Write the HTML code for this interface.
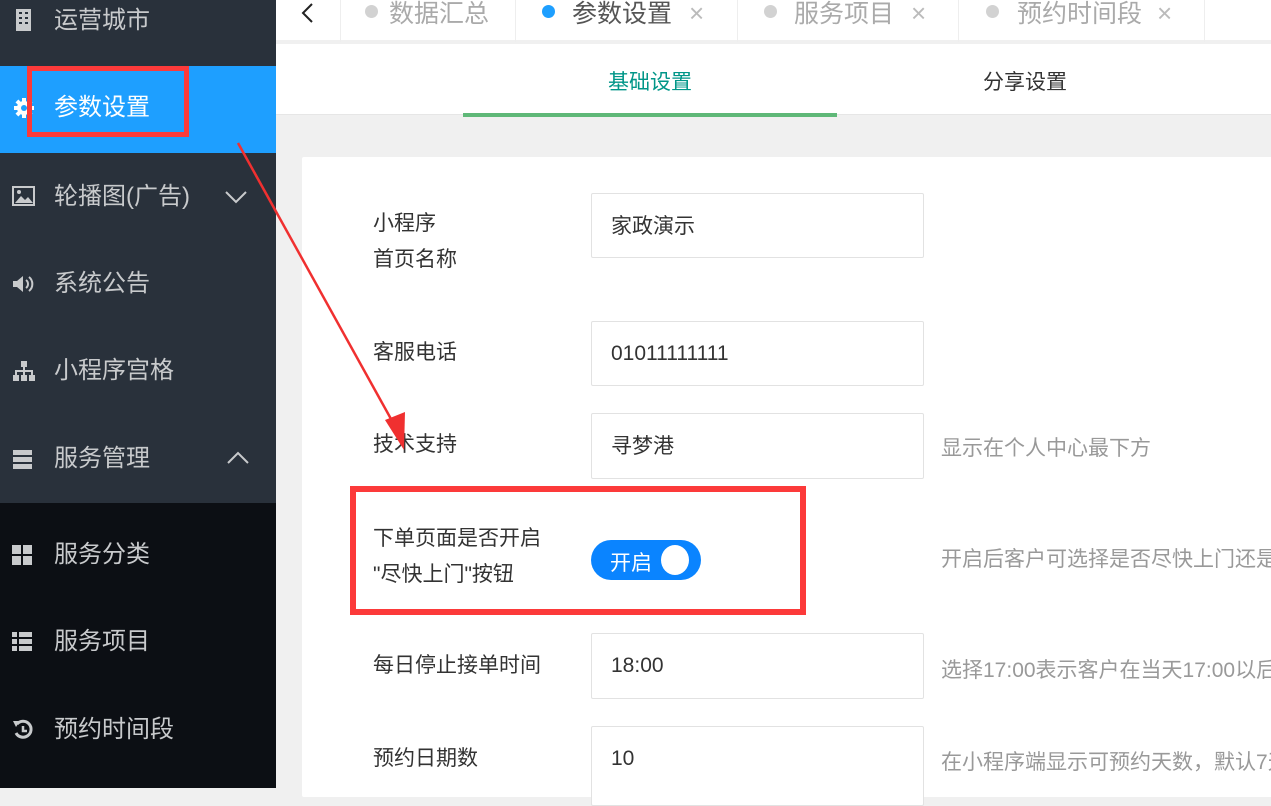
<!DOCTYPE html>
<html><head><meta charset="utf-8"><style>
*{margin:0;padding:0;box-sizing:border-box}
body{width:1271px;height:788px;overflow:hidden;position:relative;background:#f0f0f0;font-family:"Liberation Sans","Noto Sans CJK SC",sans-serif}
.abs{position:absolute}
.side{left:0;top:0;width:276px;height:788px;background:#0c0f14}
.item{position:absolute;left:0;width:276px;color:#c8cacc;font-size:24px;line-height:30px}
.item span{position:absolute;left:54px;white-space:nowrap}
.ic{position:absolute;left:12px;width:24px;height:24px}
.lbl{position:absolute;left:373px;font-size:21px;color:#333;line-height:36px;white-space:nowrap}
.inp{position:absolute;left:591px;width:333px;border:1px solid #e2e2e2;border-radius:2px;background:#fff;font-size:21px;color:#333;padding-left:19px}
.hint{position:absolute;left:941px;font-size:21px;color:#999;white-space:nowrap}
.tt{position:absolute;top:-6px;font-size:25px;color:#aaa;white-space:nowrap}
.x{position:absolute;top:-2px;font-size:26px;color:#bbb;font-weight:300}
</style></head><body>
<div class="abs side"></div>
<div class="abs" style="left:0;top:0;width:276px;height:503px;background:#29313b"></div>
<div class="abs" style="left:0;top:66px;width:276px;height:87px;background:#1e9fff"></div>

<div class="item" style="top:6px"><svg class="ic" style="top:2px" viewBox="0 0 24 24"><rect x="4" y="1" width="15" height="22" fill="#c8cacc"/><g fill="#29313b"><rect x="7" y="4" width="3" height="2"/><rect x="13" y="4" width="3" height="2"/><rect x="7" y="9" width="3" height="2"/><rect x="13" y="9" width="3" height="2"/><rect x="7" y="14" width="3" height="2"/><rect x="13" y="14" width="3" height="2"/></g></svg><span>运营城市</span></div>
<div class="item" style="top:93px;color:#fff"><svg class="ic" style="top:3px" viewBox="0 0 24 24"><g fill="#fff"><circle cx="12" cy="12" r="7"/><rect x="10" y="2" width="4" height="20"/><rect x="2" y="10" width="20" height="4"/><rect x="10" y="2" width="4" height="20" transform="rotate(45 12 12)"/><rect x="10" y="2" width="4" height="20" transform="rotate(-45 12 12)"/></g><circle cx="12" cy="12" r="3" fill="#1e9fff"/></svg><span>参数设置</span></div>
<div class="item" style="top:182px"><svg class="ic" style="top:2px" viewBox="0 0 24 24"><rect x="1" y="3" width="21" height="18" fill="none" stroke="#c8cacc" stroke-width="2"/><path d="M3 19l6-7 4 4 3-3 5 6z" fill="#c8cacc"/><circle cx="7" cy="8" r="2" fill="#c8cacc"/></svg><span>轮播图(广告)</span><svg class="abs" style="left:224px;top:8px" width="24" height="14"><path d="M2 2l10 10 10-10" fill="none" stroke="#c8cacc" stroke-width="2"/></svg></div>
<div class="item" style="top:269px"><svg class="ic" style="top:3px" viewBox="0 0 24 24"><path d="M1 9h4l6-5v16l-6-5H1z" fill="#c8cacc"/><path d="M14 8a5 5 0 010 8M17 5a9 9 0 010 14" fill="none" stroke="#c8cacc" stroke-width="2"/></svg><span>系统公告</span></div>
<div class="item" style="top:356px"><svg class="ic" style="top:3px" viewBox="0 0 24 24"><rect x="9" y="2" width="6" height="6" fill="#c8cacc"/><rect x="1" y="16" width="6" height="6" fill="#c8cacc"/><rect x="9" y="16" width="6" height="6" fill="#c8cacc"/><rect x="17" y="16" width="6" height="6" fill="#c8cacc"/><path d="M12 8v8M4 16v-4h16v4" fill="none" stroke="#c8cacc" stroke-width="2"/></svg><span>小程序宫格</span></div>
<div class="item" style="top:444px"><svg class="ic" style="top:3px" viewBox="0 0 24 24"><rect x="1" y="3" width="19" height="5" fill="#c8cacc"/><rect x="1" y="10" width="19" height="5" fill="#c8cacc"/><rect x="1" y="17" width="19" height="5" fill="#c8cacc"/></svg><span>服务管理</span><svg class="abs" style="left:226px;top:7px" width="24" height="14"><path d="M2 12l10-10 10 10" fill="none" stroke="#c8cacc" stroke-width="2"/></svg></div>
<div class="item" style="top:540px"><svg class="ic" style="top:3px" viewBox="0 0 24 24"><rect x="0" y="2" width="9" height="9" fill="#c8cacc"/><rect x="11" y="2" width="9" height="9" fill="#c8cacc"/><rect x="0" y="13" width="9" height="9" fill="#c8cacc"/><rect x="11" y="13" width="9" height="9" fill="#c8cacc"/></svg><span>服务分类</span></div>
<div class="item" style="top:627px"><svg class="ic" style="top:3px" viewBox="0 0 24 24"><rect x="0" y="2" width="5" height="5" fill="#c8cacc"/><rect x="7" y="2" width="13" height="5" fill="#c8cacc"/><rect x="0" y="9" width="5" height="5" fill="#c8cacc"/><rect x="7" y="9" width="13" height="5" fill="#c8cacc"/><rect x="0" y="16" width="5" height="5" fill="#c8cacc"/><rect x="7" y="16" width="13" height="5" fill="#c8cacc"/></svg><span>服务项目</span></div>
<div class="item" style="top:715px"><svg class="ic" style="top:3px" viewBox="0 0 24 24"><path d="M5 6a8 8 0 11-1 9" fill="none" stroke="#c8cacc" stroke-width="3"/><path d="M1 3l7 0-4 6z" fill="#c8cacc"/><path d="M11 8v5h4" fill="none" stroke="#c8cacc" stroke-width="2.5"/></svg><span>预约时间段</span></div>

<!-- tab bar -->
<div class="abs" style="left:276px;top:0;width:995px;height:42px;background:#fff;border-bottom:2px solid #f0f0f0"></div>
<svg class="abs" style="left:298px;top:2px" width="20" height="22"><path d="M14 2L5 11l9 9" fill="none" stroke="#222" stroke-width="2"/></svg>
<div class="abs" style="left:340px;top:0;width:1px;height:42px;background:#eee"></div>
<div class="abs" style="left:515px;top:0;width:1px;height:42px;background:#eee"></div>
<div class="abs" style="left:737px;top:0;width:1px;height:42px;background:#eee"></div>
<div class="abs" style="left:958px;top:0;width:1px;height:42px;background:#eee"></div>
<div class="abs" style="left:1204px;top:0;width:1px;height:42px;background:#eee"></div>
<div class="abs" style="left:365px;top:5px;width:13px;height:13px;border-radius:50%;background:#d2d2d2"></div>
<div class="tt" style="left:389px">数据汇总</div>
<div class="abs" style="left:542px;top:5px;width:13px;height:13px;border-radius:50%;background:#1e9fff"></div>
<div class="tt" style="left:572px;color:#555">参数设置</div>
<div class="x" style="left:689px">×</div>
<div class="abs" style="left:764px;top:5px;width:13px;height:13px;border-radius:50%;background:#d2d2d2"></div>
<div class="tt" style="left:794px">服务项目</div>
<div class="x" style="left:911px">×</div>
<div class="abs" style="left:986px;top:5px;width:13px;height:13px;border-radius:50%;background:#d2d2d2"></div>
<div class="tt" style="left:1017px">预约时间段</div>
<div class="x" style="left:1157px">×</div>

<!-- sub tabs -->
<div class="abs" style="left:276px;top:44px;width:995px;height:71px;background:#fff;border-bottom:1px solid #e6e6e6"></div>
<div class="abs" style="left:608px;top:66px;font-size:21px;color:#009688">基础设置</div>
<div class="abs" style="left:983px;top:66px;font-size:21px;color:#333">分享设置</div>
<div class="abs" style="left:463px;top:113px;width:374px;height:4px;background:#5fb878"></div>

<!-- card -->
<div class="abs" style="left:302px;top:157px;width:980px;height:640px;background:#fff;border-radius:2px"></div>
<div class="lbl" style="top:206px">小程序<br>首页名称</div>
<div class="inp" style="top:193px;height:65px;line-height:66px">家政演示</div>
<div class="lbl" style="top:335px">客服电话</div>
<div class="inp" style="top:321px;height:65px;line-height:64px">01011111111</div>
<div class="lbl" style="top:427px">技术支持</div>
<div class="inp" style="top:413px;height:66px;line-height:66px">寻梦港</div>
<div class="hint" style="top:432px">显示在个人中心最下方</div>
<div class="lbl" style="top:521px">下单页面是否开启<br>"尽快上门"按钮</div>
<div class="abs" style="left:591px;top:540px;width:110px;height:40px;border-radius:20px;background:#0a84ff"></div>
<div class="abs" style="left:610px;top:547px;font-size:21px;color:#fff">开启</div>
<div class="abs" style="left:661px;top:545px;width:28px;height:30px;border-radius:50%;background:#fff"></div>
<div class="hint" style="top:543px">开启后客户可选择是否尽快上门还是</div>
<div class="lbl" style="top:648px">每日停止接单时间</div>
<div class="inp" style="top:633px;height:66px;line-height:64px">18:00</div>
<div class="hint" style="top:654px">选择17:00表示客户在当天17:00以后</div>
<div class="lbl" style="top:741px">预约日期数</div>
<div class="inp" style="top:726px;height:80px;line-height:64px">10</div>
<div class="hint" style="top:746px">在小程序端显示可预约天数，默认7天</div>

<!-- annotations -->
<div class="abs" style="left:27px;top:66px;width:162px;height:71px;border:5px solid #fc3a3a"></div>
<div class="abs" style="left:350px;top:486px;width:456px;height:129px;border:6px solid #fc3a3a"></div>
<svg class="abs" style="left:0;top:0" width="1271" height="788"><line x1="238" y1="143" x2="396" y2="428" stroke="#f03030" stroke-width="2.5"/><path d="M404 450L385 420 405 412z" fill="#f03030"/></svg>
</body></html>
